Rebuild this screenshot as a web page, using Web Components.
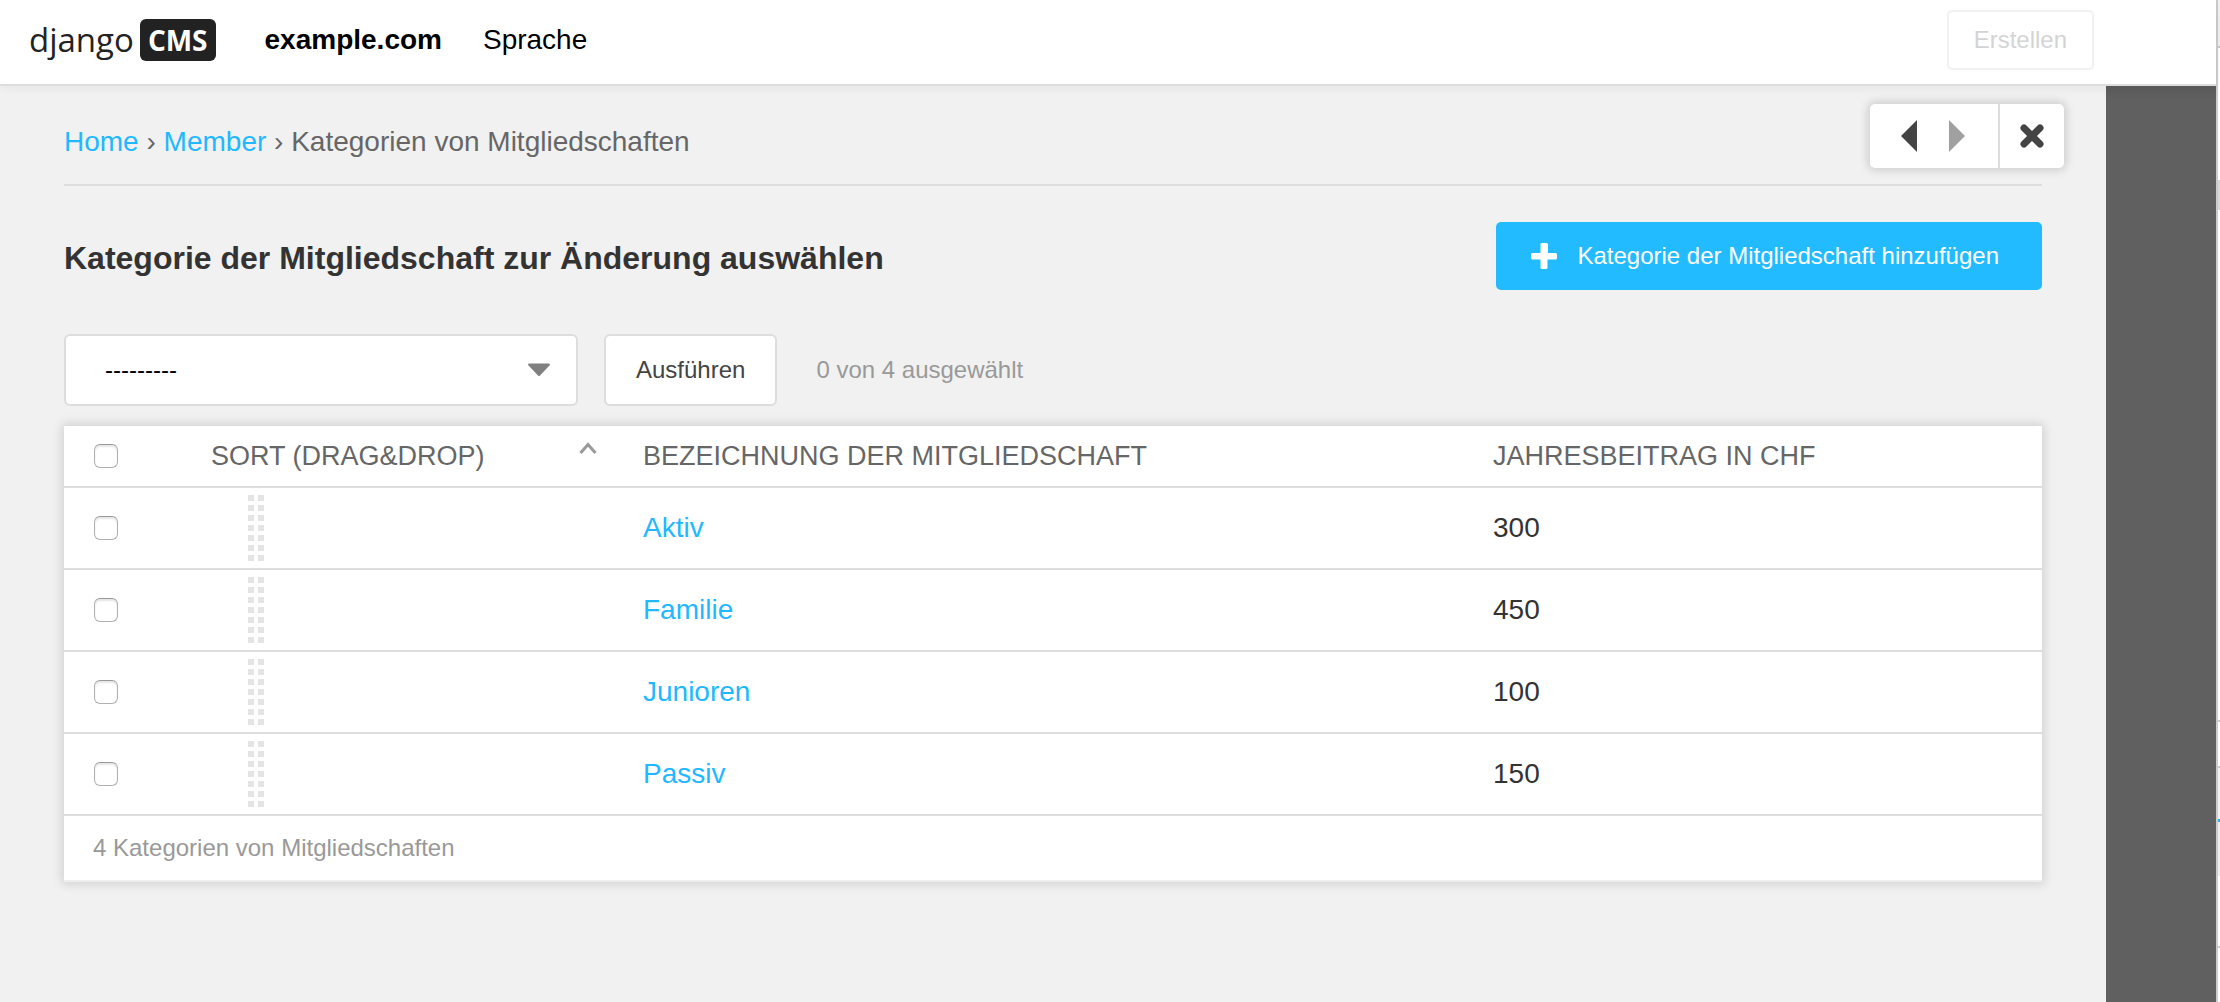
<!DOCTYPE html>
<html lang="de">
<head>
<meta charset="utf-8">
<title>Kategorie der Mitgliedschaft zur Änderung auswählen</title>
<style>
  body { margin: 0; font: 28px/32px "Liberation Sans", Arial, sans-serif; color: #333; background: #f1f1f1; }
</style>
</head>
<body>
<cms-app></cms-app>

<template id="cms-app">
  <style>
    :host { display: flex; min-height: 100vh; }
    .window { flex: 1; display: flex; flex-direction: column; min-width: 0; }
    .stage { flex: 1; display: flex; }
    cms-modal { flex: 1; min-width: 0; }
    .backdrop { flex: 0 0 110px; background: linear-gradient(#5b5b5b, #606060 14px); }
  </style>
  <div class="window">
    <cms-toolbar></cms-toolbar>
    <div class="stage">
      <cms-modal>
        <cms-breadcrumbs></cms-breadcrumbs>
        <cms-heading>Kategorie der Mitgliedschaft zur Änderung auswählen</cms-heading>
        <cms-actions></cms-actions>
        <cms-results></cms-results>
      </cms-modal>
      <div class="backdrop"></div>
    </div>
  </div>
  <cms-edge></cms-edge>
</template>

<template id="cms-edge">
  <style>
    :host { display: flex; flex: 0 0 2px; border-left: 2px solid #ccc;
      background: linear-gradient(#f1f1f1 46px, #ccc 46px 48px, #fff 48px 180px, #d8d8d8 180px 210px, #fff 210px 720px, #ccc 720px 722px, #fff 722px 766px, #ccc 766px 768px, #f1f1f1 768px 819px, #22b4f5 819px 822px, #eee 822px 876px, #fff 876px 946px, #ccc 946px 948px, #fff 948px); }
  </style>
</template>

<template id="cms-toolbar">
  <style>
    :host { display: flex; align-items: center; justify-content: space-between; position: relative; z-index: 1; box-sizing: border-box; height: 86px;
      padding: 0 122px 4px 29px; background: #fff; border-bottom: 2px solid #ddd; box-shadow: 0 2px 10px rgba(0,0,0,.05); color: #000; }
    nav { display: flex; align-items: center; gap: 41px; }
    a { color: inherit; text-decoration: none; }
    .site { font-weight: bold; }
    .logo { display: flex; align-items: center; gap: 6px; margin-right: 8px; font: 33px/42px "Open Sans", sans-serif; color: #222; }
    .logo b { font-size: 28px; padding: 0 8px; border-radius: 6px; background: #222; color: #fff; }
    button { box-sizing: border-box; height: 60px; padding: 0 25px; border: 2px solid #f1f1f1; border-radius: 5px; background: #fff; color: #d4d4d4; font: 24px/32px "Liberation Sans", Arial, sans-serif; }
  </style>
  <nav>
    <a class="logo" href="#"><span>django</span><b>CMS</b></a>
    <a class="site" href="#">example.com</a>
    <a href="#">Sprache</a>
  </nav>
  <button type="button" disabled>Erstellen</button>
</template>

<template id="cms-modal">
  <style>
    :host { display: block; position: relative; padding: 40px 64px; background: #f1f1f1; }
    .controls { position: absolute; top: 18px; right: 42px; display: flex; border-radius: 5px; background: #fff; box-shadow: 0 0 10px 2px rgba(0,0,0,.16); }
    button { box-sizing: border-box; display: flex; align-items: center; justify-content: center; width: 64px; height: 64px; border: 0; padding: 0; background: none; }
    .prev { padding-left: 14px; }
    .next { padding-right: 18px; }
    .close { width: 66px; border-left: 2px solid #ddd; }
  </style>
  <div class="controls">
    <button class="prev" type="button" aria-label="Zurück"><svg width="16" height="32"><path d="M16 0V32L0 16z" fill="#444"/></svg></button>
    <button class="next" type="button" aria-label="Vor"><svg width="16" height="32"><path d="M0 0V32L16 16z" fill="#a0a0a0"/></svg></button>
    <button class="close" type="button" aria-label="Schließen"><svg width="24" height="24"><path d="M4 4L20 20M20 4L4 20" stroke="#444" stroke-width="7" stroke-linecap="round"/></svg></button>
  </div>
  <slot></slot>
</template>

<template id="cms-breadcrumbs">
  <style>
    :host { display: block; padding-bottom: 26px; border-bottom: 2px solid #ddd; color: #666; }
    a { color: #22b8ff; text-decoration: none; }
  </style>
  <nav aria-label="Brotkrumen"><a href="#">Home</a> › <a href="#">Member</a> › Kategorien von Mitgliedschaften</nav>
</template>

<template id="cms-heading">
  <style>
    :host { display: flex; align-items: center; justify-content: space-between; margin-top: 36px; }
    h1 { margin: 0; padding-top: 4px; font-size: 32px; line-height: 36px; }
    a { display: flex; align-items: center; gap: 20px; box-sizing: border-box; height: 68px; padding: 0 43px 0 35px; border-radius: 5px; background: #22bbff; color: #fff; font-size: 24px; text-decoration: none; }
  </style>
  <h1><slot></slot></h1>
  <a href="#"><svg width="26" height="26"><path d="M10.500 0h5q1.500 0 1.500 1.500V10H24.500Q26 10 26 11.500V15Q26 16.500 24.500 16.500H16.500V24.500Q16.500 26 15 26H11Q9.500 26 9.500 24.500V16.500H1.500Q0 16.500 0 15V11.500Q0 10 1.500 10H9.500V1.500Q9.500 0 10.500 0z" fill="#fff"/></svg>Kategorie der Mitgliedschaft hinzufügen</a>
</template>

<template id="cms-actions">
  <style>
    :host { display: flex; align-items: center; margin: 44px 0 20px; font-size: 24px; color: #999; }
    .pick { display: grid; align-items: center; width: 514px; margin-right: 26px; }
    select, .pick svg { grid-area: 1 / 1; }
    .pick svg { justify-self: end; margin-right: 28px; pointer-events: none; }
    select, button { box-sizing: border-box; height: 72px; border: 2px solid #ddd; border-radius: 6px; background: #fff; font: 24px/32px "Liberation Sans", Arial, sans-serif; }
    select { appearance: none; width: 100%; padding: 0 39px; color: #000; }
    button { padding: 0 30px; margin-right: 39px; color: #444; }
  </style>
  <div class="pick">
    <select aria-label="Aktion"><option>---------</option></select>
    <svg width="22" height="14"><path d="M1 0.5H21Q22.500 1 21.500 2.500L12 12.500Q11 13.500 10 12.500L0.500 2.500Q-.5 1 1 .5z" fill="#808080"/></svg>
  </div>
  <button type="button">Ausführen</button>
  <span>0 von 4 ausgewählt</span>
</template>

<template id="cms-results">
  <style>
    :host { display: block; background: #fff; box-shadow: 0 0 10px 2px rgba(0,0,0,.14); }
    table { width: 100%; border-collapse: separate; border-spacing: 0; table-layout: fixed; }
    th, td { height: 80px; padding: 0; border-bottom: 2px solid #ddd; text-align: left; vertical-align: middle; font-weight: normal; }
    th { height: 60px; color: #666; font-size: 27px; text-transform: uppercase; }
    th:nth-child(1) { width: 147px; }
    th:nth-child(2) { width: 432px; }
    th:nth-child(4) { width: 549px; }
    .sort { display: flex; justify-content: space-between; padding-right: 46px; }
    a { color: #22b8ff; text-decoration: none; }
    input { box-sizing: border-box; display: block; appearance: none; width: 24px; height: 24px; margin: 0 0 0 30px; border: 1px solid #b0b0b0; border-top-color: #999; border-radius: 6px; background: #fff; box-shadow: inset 0 2px 2px rgba(0,0,0,.1); }
    .grip { display: block; margin-left: 37px; }
    footer { padding: 16px 29px; border-bottom: 2px solid #eee; font-size: 24px; color: #999; }
  </style>
  <table>
    <thead><tr>
      <th><input type="checkbox" aria-label="Alle auswählen"></th>
      <th><span class="sort">Sort (drag&amp;drop)<svg width="18" height="20"><path d="M1.500 13L9 4.500L16.500 13" fill="none" stroke="#999" stroke-width="3"/></svg></span></th>
      <th>Bezeichnung der Mitgliedschaft</th>
      <th>Jahresbeitrag in CHF</th>
    </tr></thead>
    <tbody></tbody>
  </table>
  <footer>4 Kategorien von Mitgliedschaften</footer>
</template>

<script>
  class CmsElement extends HTMLElement {
    constructor() {
      super();
      this.attachShadow({ mode: 'open' }).append(
        document.getElementById(this.localName).content.cloneNode(true));
    }
  }

  class CmsResults extends CmsElement {
    connectedCallback() {
      const rows = [['Aktiv', 300], ['Familie', 450], ['Junioren', 100], ['Passiv', 150]];
      let dots = '';
      for (let i = 0; i < 7; i++) dots += `M0 ${i * 10}h6v6h-6zM10 ${i * 10}h6v6h-6z`;
      this.shadowRoot.querySelector('tbody').innerHTML = rows.map(([name, fee]) => `
        <tr>
          <td><input type="checkbox" aria-label="${name}"></td>
          <td><svg class="grip" width="16" height="66"><path d="${dots}" fill="#e4e4e4"/></svg></td>
          <td><a href="#">${name}</a></td>
          <td>${fee}</td>
        </tr>`).join('');
    }
  }

  for (const name of ['cms-edge', 'cms-toolbar', 'cms-modal', 'cms-breadcrumbs', 'cms-heading', 'cms-actions'])
    customElements.define(name, class extends CmsElement {});
  customElements.define('cms-results', CmsResults);
  customElements.define('cms-app', class extends CmsElement {});
</script>
</body>
</html>
